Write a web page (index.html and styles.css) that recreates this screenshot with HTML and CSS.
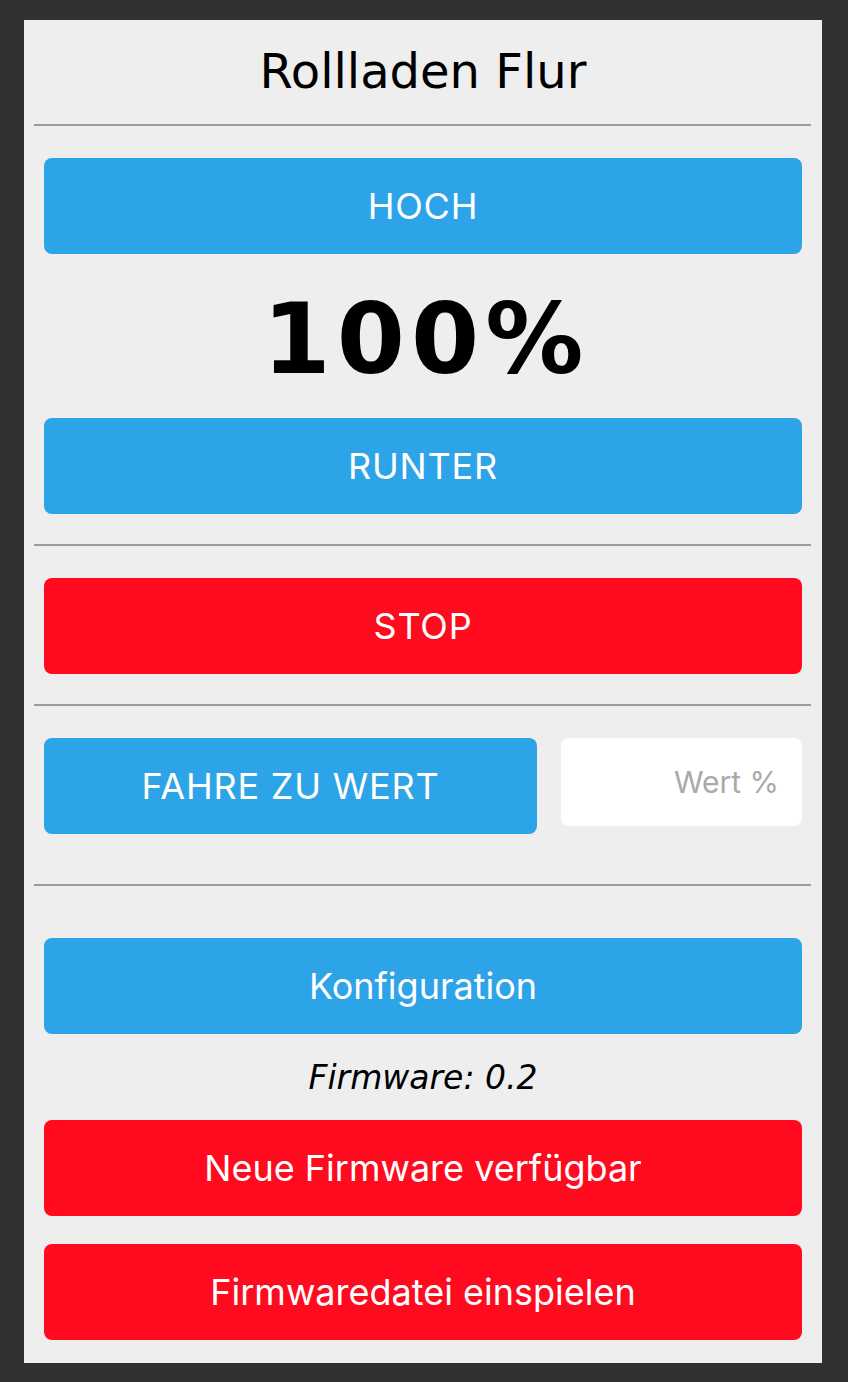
FILE: index.html
```html
<!DOCTYPE html>
<html lang="de">
<head>
<meta charset="utf-8">
<title>Rollladen Flur</title>
<link rel="stylesheet" href="styles.css">
</head>
<body>
<main class="panel">
  <h1 class="title">Rollladen Flur</h1>
  <hr class="rule rule-top">
  <button class="btn btn-blue btn-caps btn-first">HOCH</button>
  <div class="percent">100%</div>
  <button class="btn btn-blue btn-caps">RUNTER</button>
  <hr class="rule">
  <button class="btn btn-red btn-caps btn-first">STOP</button>
  <hr class="rule">
  <div class="goto-row">
    <button class="btn btn-blue btn-caps">FAHRE ZU WERT</button>
    <input class="value-input" type="text" placeholder="Wert %">
  </div>
  <hr class="rule rule-wide">
  <button class="btn btn-blue btn-config">Konfiguration</button>
  <p class="firmware">Firmware: 0.2</p>
  <button class="btn btn-red">Neue Firmware verfügbar</button>
  <button class="btn btn-red btn-upload">Firmwaredatei einspielen</button>
</main>
</body>
</html>
```

FILE: styles.css
```css
html, body {
  margin: 0;
  padding: 0;
  background: #313131;
}

.panel {
  width: 798px;
  margin: 20px 0 0 24px;
  padding: 23px 0 23px;
  background: #eeeeee;
  display: flex;
  flex-direction: column;
  box-sizing: border-box;
}

.title {
  margin: 0;
  font-family: "DejaVu Sans", Verdana, sans-serif;
  font-weight: normal;
  font-size: 48px;
  line-height: 56px;
  text-align: center;
  color: #000;
}

.rule {
  border: 0;
  height: 2px;
  background: #9b9b9b;
  margin: 30px 11px 0 10px;
}

.rule-top {
  margin-top: 25px;
}

.rule-wide {
  margin-top: 50px;
}

.btn {
  display: flex;
  align-items: center;
  justify-content: center;
  height: 96px;
  margin: 0 20px;
  padding: 0;
  border: 0;
  border-radius: 8px;
  font-family: "Inter", "Liberation Sans", Arial, sans-serif;
  font-size: 36px;
  color: #ffffff;
}

.btn-caps {
  letter-spacing: 0.8px;
}

.btn-first {
  margin-top: 32px;
}

.btn-blue {
  background: #2ea4e8;
}

.btn-red {
  background: #ff0a1e;
}

.percent {
  font-family: "DejaVu Sans", Verdana, sans-serif;
  font-weight: bold;
  font-size: 98px;
  letter-spacing: 6px;
  text-indent: 6px;
  line-height: 114px;
  padding: 28px 0 22px;
  text-align: center;
  color: #000;
}

.goto-row {
  display: grid;
  grid-template-columns: 1fr 241px;
  column-gap: 24px;
  align-items: start;
  margin: 32px 20px 0;
}

.goto-row .btn {
  margin: 0;
}

.value-input {
  height: 88px;
  box-sizing: border-box;
  border: 0;
  border-radius: 8px;
  background: #ffffff;
  padding: 0 23px 0 10px;
  text-align: right;
  font-family: "Inter", "Liberation Sans", Arial, sans-serif;
  font-size: 30px;
  color: #000;
  outline: none;
}

.value-input::placeholder {
  color: #a9a9a9;
}

.btn-config {
  margin-top: 52px;
}

.firmware {
  margin: 0;
  padding-top: 2px;
  font-family: "DejaVu Sans", Verdana, sans-serif;
  font-style: italic;
  font-size: 33px;
  line-height: 84px;
  text-align: center;
  color: #000;
}

.btn-upload {
  margin-top: 28px;
}
```
